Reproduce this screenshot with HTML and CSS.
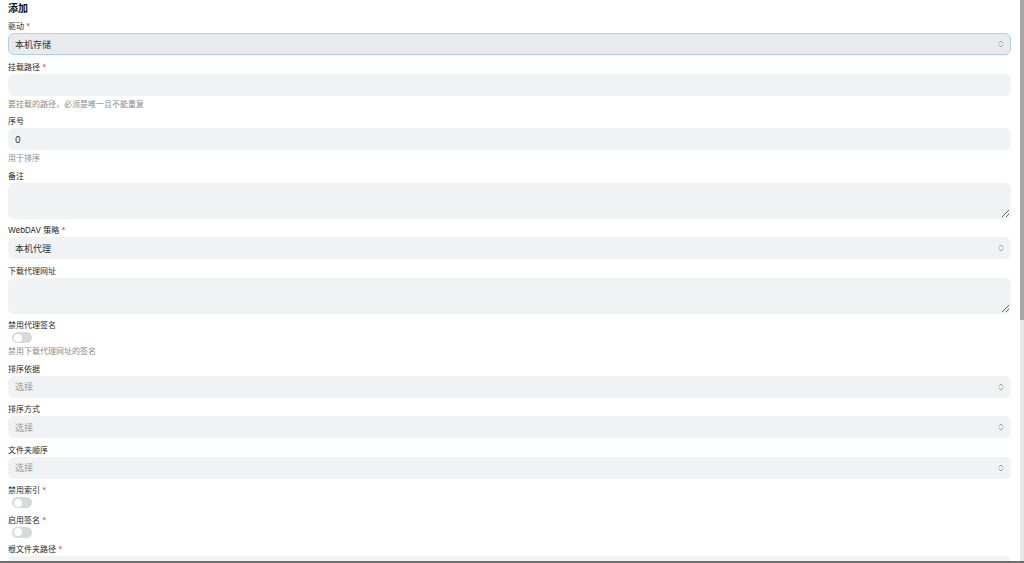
FILE: index.html
```html
<!DOCTYPE html>
<html lang="zh-CN">
<head>
  <meta charset="UTF-8" />
  <title>添加存储</title>
  <meta name="viewport" content="width=device-width, initial-scale=1" />
  <link rel="stylesheet" href="styles.css">
</head>
<body class="admin-body">

  <main class="page">
    <h2 class="page-title">添加</h2>

    <form class="storage-form">
      <!-- Driver -->
      <div class="field">
        <label class="field-label">驱动 <span class="req">*</span></label>
        <div class="select-wrap">
          <select class="control control-select is-focused">
            <option>本机存储</option>
          </select>
          <svg class="chevron" width="6" height="10" viewBox="0 0 6 10" aria-hidden="true">
            <path d="M1 4L3 2L5 4M1 6L3 8L5 6" fill="none" stroke="currentColor" stroke-width="0.9" stroke-linecap="round" stroke-linejoin="round"/>
          </svg>
        </div>
      </div>

      <div class="field">
        <label class="field-label">挂载路径 <span class="req">*</span></label>
        <input class="control" type="text" />
        <p class="hint">要挂载的路径，必须是唯一且不能重复</p>
      </div>

      <div class="field">
        <label class="field-label">序号</label>
        <input class="control" type="text" value="0" />
        <p class="hint">用于排序</p>
      </div>

      <div class="field">
        <label class="field-label">备注</label>
        <textarea class="control control-area"></textarea>
      </div>

      <div class="field">
        <label class="field-label">WebDAV 策略 <span class="req">*</span></label>
        <div class="select-wrap">
          <select class="control control-select">
            <option>本机代理</option>
          </select>
          <svg class="chevron" width="6" height="10" viewBox="0 0 6 10" aria-hidden="true">
            <path d="M1 4L3 2L5 4M1 6L3 8L5 6" fill="none" stroke="currentColor" stroke-width="0.9" stroke-linecap="round" stroke-linejoin="round"/>
          </svg>
        </div>
      </div>

      <div class="field">
        <label class="field-label">下载代理网址</label>
        <textarea class="control control-area"></textarea>
      </div>

      <div class="field">
        <label class="field-label">禁用代理签名</label>
        <span class="switch"></span>
        <p class="hint hint-switch">禁用下载代理网址的签名</p>
      </div>

      <div class="field">
        <label class="field-label">排序依据</label>
        <div class="select-wrap">
          <select class="control control-select is-empty">
            <option>选择</option>
          </select>
          <svg class="chevron" width="6" height="10" viewBox="0 0 6 10" aria-hidden="true">
            <path d="M1 4L3 2L5 4M1 6L3 8L5 6" fill="none" stroke="currentColor" stroke-width="0.9" stroke-linecap="round" stroke-linejoin="round"/>
          </svg>
        </div>
      </div>

      <div class="field">
        <label class="field-label">排序方式</label>
        <div class="select-wrap">
          <select class="control control-select is-empty">
            <option>选择</option>
          </select>
          <svg class="chevron" width="6" height="10" viewBox="0 0 6 10" aria-hidden="true">
            <path d="M1 4L3 2L5 4M1 6L3 8L5 6" fill="none" stroke="currentColor" stroke-width="0.9" stroke-linecap="round" stroke-linejoin="round"/>
          </svg>
        </div>
      </div>

      <div class="field">
        <label class="field-label">文件夹顺序</label>
        <div class="select-wrap">
          <select class="control control-select is-empty">
            <option>选择</option>
          </select>
          <svg class="chevron" width="6" height="10" viewBox="0 0 6 10" aria-hidden="true">
            <path d="M1 4L3 2L5 4M1 6L3 8L5 6" fill="none" stroke="currentColor" stroke-width="0.9" stroke-linecap="round" stroke-linejoin="round"/>
          </svg>
        </div>
      </div>

      <div class="field">
        <label class="field-label">禁用索引 <span class="req">*</span></label>
        <span class="switch"></span>
      </div>

      <div class="field">
        <label class="field-label">启用签名 <span class="req">*</span></label>
        <span class="switch"></span>
      </div>

      <div class="field">
        <label class="field-label">根文件夹路径 <span class="req">*</span></label>
        <input class="control" type="text" />
      </div>

      <div class="field">
        <label class="field-label">缩略图</label>
        <span class="switch"></span>
      </div>

      <div class="field">
        <label class="field-label">缩略图缓存文件夹</label>
        <input class="control" type="text" />
      </div>

      <div class="field">
        <label class="field-label">缩略图并发数</label>
        <input class="control" type="text" value="16" />
      </div>

      <div class="field">
        <label class="field-label">视频缩略图位置</label>
        <input class="control" type="text" value="20%" />
      </div>

      <div class="field">
        <label class="field-label">显示隐藏</label>
        <span class="switch"></span>
      </div>

      <div class="field">
        <label class="field-label">创建目录权限</label>
        <input class="control" type="text" value="777" />
      </div>

      <div class="field">
        <label class="field-label">回收站路径</label>
        <input class="control" type="text" value="delete permanently" />
        <p class="hint">永久删除或移至回收站的路径</p>
      </div>

      <div class="field">
        <label class="field-label">目录大小</label>
        <span class="switch"></span>
      </div>

      <div class="actions">
        <button type="button" class="btn">添加</button>
      </div>
    </form>
  </main>

  <!-- Barres de défilement de la fenêtre (dessinées par-dessus) -->
  <div class="fake-scroll-y"><div class="fake-thumb"></div></div>
  <div class="fake-scroll-x"></div>

</body>
</html>
```

FILE: styles.css
```css
/* ===== PAGE ===== */
.admin-body {
  margin: 0;
  background: #fff;
  color: #333;
  font-family: Inter, "Noto Sans CJK SC", sans-serif;
}

.page { padding: 0 13px 30px 8px; }

.page-title {
  margin: 0 0 3px 0; padding-top: 1px;
  font-size: 10px; line-height: 15px; font-weight: 700; color: #111;
}

.storage-form { display: flex; flex-direction: column; gap: 4.5px; }

.field { display: flex; flex-direction: column; align-items: stretch; }

.field-label {
  font-size: 8px; line-height: 12px; font-weight: 400; color: #1f1f1f;
  padding-top: 1px; margin-bottom: 1px;
}
.req { color: #e5484d; }

/* ===== CONTROLS ===== */
.control {
  box-sizing: border-box;
  display: block;
  width: 100%; height: 22px; margin: 0;
  padding: 0 6px;
  border: 1px solid transparent; border-radius: 6px;
  background: #f1f2f4;
  font-family: inherit; font-size: 9px; color: #333;
  outline: none;
}
.control-area {
  height: 36px; padding: 5px 6px;
  resize: vertical;
}

.select-wrap { position: relative; height: 22px; }
.control-select {
  -webkit-appearance: none; appearance: none;
  padding-right: 22px;
}
.control-select.is-focused {
  background: #e9eaec;
  border-color: #a8d0f5;
}
.control-select.is-empty { color: #9b9b9b; }

.chevron {
  position: absolute; right: 7px; top: 6px;
  color: #9a9a9a; pointer-events: none;
}

.hint {
  margin: 2px 0 0 0;
  font-size: 8px; line-height: 12px; color: #8a8a8a;
}
.hint-switch { margin-top: 2px; }

/* ===== SWITCH ===== */
.switch {
  position: relative;
  width: 20px; height: 11px; margin-left: 4px;
  border-radius: 999px;
  background: #d8d9db;
}
.switch::after {
  content: "";
  position: absolute; left: 1.5px; top: 1.5px;
  width: 8px; height: 8px; border-radius: 50%;
  background: #fff;
}

/* ===== ACTIONS ===== */
.actions { margin-top: 8px; }
.btn {
  padding: 5px 12px; border-radius: 6px; border: none;
  background: #e8f1fc; color: #1f6fd1;
  font-family: inherit; font-size: 9px; font-weight: 600; cursor: pointer;
}

/* ===== SCROLLBARS ===== */
.fake-scroll-y {
  position: fixed; top: 0; right: 0; bottom: 2px;
  width: 4px; background: #e6e6e6;
}
.fake-thumb { height: 320px; background: #a6a6a6; }
.fake-scroll-x {
  position: fixed; left: 0; right: 0; bottom: 0;
  height: 2px; background: #6e6e6e;
}
```
